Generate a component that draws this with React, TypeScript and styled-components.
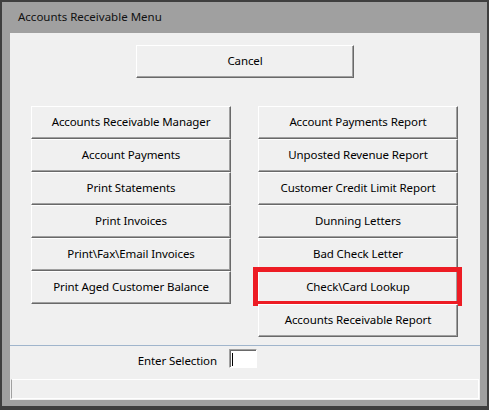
import styled, { createGlobalStyle } from 'styled-components';

const GlobalStyle = createGlobalStyle`
  html, body {
    margin: 0;
    padding: 0;
    background: #a0a0a0;
  }
  * {
    box-sizing: border-box;
  }
`;

const leftItems = [
  'Accounts Receivable Manager',
  'Account Payments',
  'Print Statements',
  'Print Invoices',
  'Print\\Fax\\Email Invoices',
  'Print Aged Customer Balance',
];

const rightItems = [
  'Account Payments Report',
  'Unposted Revenue Report',
  'Customer Credit Limit Report',
  'Dunning Letters',
  'Bad Check Letter',
  'Check\\Card Lookup',
  'Accounts Receivable Report',
];

/** 미수금 메뉴 창 */
const App = () => {
  return (
    <>
      <GlobalStyle />
      <Window>
        <TitleBar>Accounts Receivable Menu</TitleBar>
        <Panel>
          <CancelRow>
            <MenuButton $width={218}>Cancel</MenuButton>
          </CancelRow>
          <MenuGrid>
            <Column>
              {leftItems.map((label) => (
                <MenuButton key={label}>{label}</MenuButton>
              ))}
            </Column>
            <Column>
              {rightItems.map((label) => (
                <MenuButton key={label} $marked={label === 'Check\\Card Lookup'}>
                  {label}
                </MenuButton>
              ))}
            </Column>
          </MenuGrid>
          <Separator />
          <SelectionRow>
            <SelectionLabel>Enter Selection</SelectionLabel>
            <SelectionInput>
              <Caret />
            </SelectionInput>
          </SelectionRow>
          <StatusBar />
        </Panel>
      </Window>
    </>
  );
};
export default App;

const Window = styled.div`
  width: 489px;
  height: 410px;
  display: flex;
  flex-direction: column;
  background: #a0a0a0;
  border-style: solid;
  border-color: #3f3f3f;
  border-width: 2px 2px 4px 2px;
  padding: 0 7px 6px 8px;
  font-family: 'Noto Sans', 'Open Sans', sans-serif;
  color: #000;
`;

const TitleBar = styled.div`
  height: 31px;
  line-height: 30px;
  padding-left: 8px;
  font-size: 11.5px;
  color: #111;
`;

const Panel = styled.div`
  width: 470px;
  height: 367px;
  background: #f0f0f0;
  display: flex;
  flex-direction: column;
  padding: 12px 0 1px;
`;

const CancelRow = styled.div`
  display: flex;
  justify-content: center;
`;

const MenuGrid = styled.div`
  display: grid;
  grid-template-columns: 200px 200px;
  column-gap: 27px;
  margin: 28px 0 0 21px;
  height: 231px;
`;

const Column = styled.div`
  display: flex;
  flex-direction: column;
`;

const MenuButton = styled.div<{ $width?: number; $marked?: boolean }>`
  position: relative;
  width: ${({ $width }) => ($width ? `${$width}px` : '100%')};
  height: 33px;
  display: flex;
  align-items: center;
  justify-content: center;
  padding-bottom: 2px;
  background: #f0f0f0;
  border-style: solid;
  border-width: 1px;
  border-color: #ffffff #696969 #696969 #ffffff;
  box-shadow: inset -1px -1px 0 #a0a0a0;
  font-size: 11.5px;
  letter-spacing: -0.1px;
  white-space: nowrap;
  cursor: default;

  ${({ $marked }) =>
    $marked &&
    `
    &::after {
      content: '';
      position: absolute;
      left: -6px;
      top: -5px;
      right: -5px;
      bottom: -3px;
      border: 5px solid #ed1c24;
      pointer-events: none;
    }
  `}
`;

const Separator = styled.div`
  height: 1px;
  margin-top: 8px;
  background: #a0b5cc;
`;

const SelectionRow = styled.div`
  display: flex;
  align-items: center;
  margin-top: 3px;
  height: 19px;
`;

const SelectionLabel = styled.span`
  width: 207px;
  text-align: right;
  font-size: 11.5px;
  letter-spacing: -0.1px;
  margin-right: 12px;
  padding-top: 3px;
`;

const SelectionInput = styled.div`
  width: 28px;
  height: 19px;
  background: #fff;
  border-style: solid;
  border-width: 1px;
  border-color: #a0a0a0 #fff #fff #a0a0a0;
  box-shadow: inset 1px 1px 0 #696969;
  padding: 3px 0 0 2px;
`;

const Caret = styled.div`
  width: 1px;
  height: 13px;
  background: #000;
`;

const StatusBar = styled.div`
  height: 20px;
  margin: 11px 1px 0 1px;
  border: 1px solid #ffffff;
  border-left-color: #a0a0a0;
`;
